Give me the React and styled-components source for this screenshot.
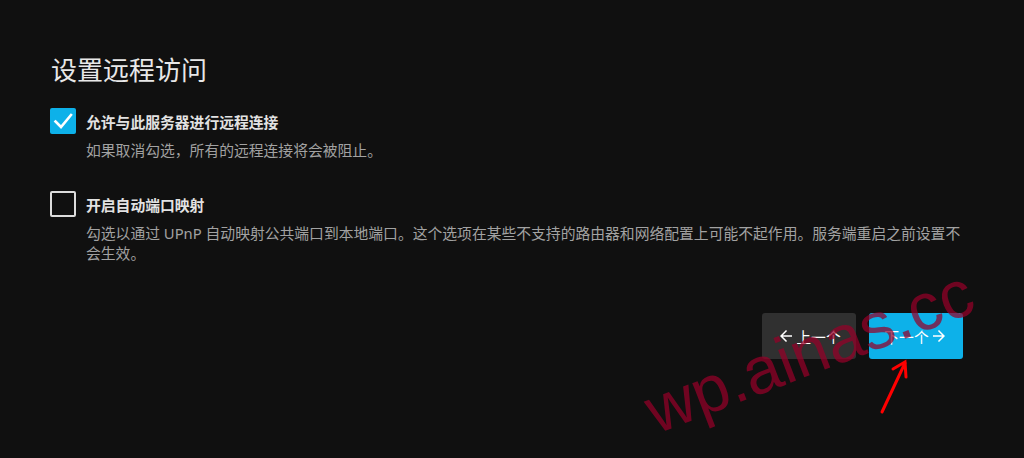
import React from "react";
import styled, { createGlobalStyle } from "styled-components";

const GlobalStyle = createGlobalStyle`
  html, body {
    margin: 0;
    padding: 0;
    background: #101010;
  }
  body {
    font-family: "Noto Sans", "Noto Sans CJK SC", sans-serif;
    -webkit-font-smoothing: antialiased;
  }
`;

const Page = styled.div`
  position: relative;
  height: 458px;
  overflow: hidden;
  background: #101010;
`;

const Wizard = styled.div`
  width: 912px;
  padding: 54px 0 0 51px;
`;

const Title = styled.h1`
  margin: 0 0 22px;
  font-size: 26px;
  line-height: 32px;
  font-weight: 400;
  color: #e8e8e8;
`;

const Field = styled.div`
  margin-bottom: ${(p) => p.spacing || 0}px;
`;

const CheckRow = styled.label`
  display: flex;
  align-items: center;
  gap: 10px;
  height: 26px;
  margin-left: -1px;
  cursor: pointer;
`;

const Box = styled.span`
  box-sizing: border-box;
  width: 26px;
  height: 26px;
  flex: none;
  border-radius: 2px;
  display: flex;
  align-items: center;
  justify-content: center;
  background: ${(p) => (p.checked ? "#0db1e9" : "transparent")};
  border: ${(p) => (p.checked ? "none" : "2px solid #dcdcdc")};
`;

const Label = styled.span`
  font-size: 14.8px;
  font-weight: 700;
  color: #e2e2e2;
  padding-top: 1px;
`;

const Description = styled.div`
  margin: 6px 0 0 35px;
  font-size: 14.8px;
  line-height: 20px;
  color: #a2a2a2;
`;

const Buttons = styled.div`
  display: flex;
  justify-content: flex-end;
  gap: 13px;
  margin-top: 50px;
`;

const Button = styled.button`
  width: 94px;
  height: 46px;
  border: none;
  border-radius: 3px;
  display: flex;
  align-items: center;
  justify-content: center;
  gap: 1px;
  padding: 0;
  font-family: inherit;
  font-size: 14.8px;
  color: #ffffff;
  background: ${(p) => (p.primary ? "#0db1e9" : "#303030")};
  cursor: pointer;
`;

const Watermark = styled.span`
  position: absolute;
  left: 809px;
  top: 351px;
  transform: translate(-50%, -50%) rotate(-21deg);
  font-family: "Liberation Sans", Arial, sans-serif;
  font-size: 66px;
  line-height: 1;
  white-space: nowrap;
  color: rgba(150, 0, 40, 0.72);
  pointer-events: none;
`;

const Pointer = styled.svg`
  position: absolute;
  left: 870px;
  top: 352px;
  pointer-events: none;
`;

const Check = () => (
  <svg width="26" height="26" viewBox="0 0 26 26">
    <path
      d="M5.5 13.5 L11 19 L21 7"
      fill="none"
      stroke="#fff"
      strokeWidth="2.6"
      strokeLinecap="square"
    />
  </svg>
);

const Arrow = ({ back }) => (
  <svg
    width="18"
    height="18"
    viewBox="0 0 24 24"
    style={back ? { transform: "scaleX(-1)" } : undefined}
  >
    <path
      fill="#fff"
      d="M12 4l-1.41 1.41L16.17 11H4v2h12.17l-5.58 5.59L12 20l8-8z"
    />
  </svg>
);

const Option = ({ checked, label, children, spacing }) => (
  <Field spacing={spacing}>
    <CheckRow>
      <Box checked={checked}>{checked && <Check />}</Box>
      <Label>{label}</Label>
    </CheckRow>
    <Description>{children}</Description>
  </Field>
);

export default function App() {
  return (
    <Page>
      <GlobalStyle />
      <Wizard>
        <Title>设置远程访问</Title>
        <Option checked label="允许与此服务器进行远程连接" spacing={31}>
          如果取消勾选，所有的远程连接将会被阻止。
        </Option>
        <Option label="开启自动端口映射">
          勾选以通过 UPnP
          自动映射公共端口到本地端口。这个选项在某些不支持的路由器和网络配置上可能不起作用。服务端重启之前设置不会生效。
        </Option>
        <Buttons>
          <Button>
            <Arrow back />
            <span>上一个</span>
          </Button>
          <Button primary>
            <span>下一个</span>
            <Arrow />
          </Button>
        </Buttons>
      </Wizard>
      <Watermark>wp.ainas.cc</Watermark>
      <Pointer width="50" height="70" viewBox="0 0 50 70">
        <g fill="none" stroke="#ff0000" strokeWidth="3" strokeLinecap="round">
          <path d="M12 60 L35 11" />
          <path d="M23 17 L35 10 L36 25" />
        </g>
      </Pointer>
    </Page>
  );
}
